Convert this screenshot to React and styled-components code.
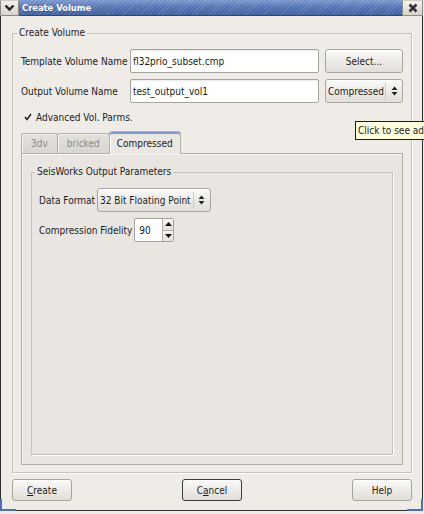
import React from 'react';
import styled, { createGlobalStyle } from 'styled-components';

const FONT = `"DejaVu Sans Condensed", "Liberation Sans", sans-serif`;

const Global = createGlobalStyle`
  *, *::before, *::after { box-sizing: border-box; }
  html, body { margin: 0; padding: 0; background: #efebe7; overflow: hidden; }
  body { width: 424px; height: 514px; font-family: ${FONT}; font-size: 10px; color: #1c1c1c; }
`;

const Stage = styled.div`
  position: relative;
  width: 424px;
  height: 514px;
  overflow: hidden;
  background: #efebe7;
`;

const Window = styled.div`
  width: 423px;
  height: 511px;
  display: flex;
  flex-direction: column;
`;

const TitleBar = styled.div`
  height: 16px;
  display: flex;
  flex: none;
`;

const FrameButton = styled.div`
  width: ${p => p.$w}px;
  height: 16px;
  flex: none;
  display: flex;
  align-items: center;
  justify-content: center;
  background: linear-gradient(#f4f2ef, #d6d2cc);
  border: 1px solid #8c8a86;
  border-top-color: #cfccc7;
`;

const TitleArea = styled.div`
  flex: 1;
  display: flex;
  align-items: center;
  padding-left: 3px;
  color: #fff;
  font-weight: bold;
  font-size: 9.3px;
  background:
    repeating-linear-gradient(135deg, rgba(255,255,255,0.13) 0 1px, transparent 1px 3px),
    linear-gradient(#7c98ce, #5575b4 45%, #3f5f9e);
  border-bottom: 1px solid #2d477c;
  text-shadow: 0 1px 0 rgba(0,0,0,0.25);
`;

const Body = styled.div`
  flex: 1;
  display: flex;
  flex-direction: column;
  padding: 11px 10px 9px 11px;
  border-left: 1px solid #2e2e2e;
  border-right: 1px solid #2e2e2e;
  border-bottom: 1px solid #2e2e2e;
  background: #efebe7;
  position: relative;
`;

const Group = styled.fieldset`
  margin: 0;
  min-width: 0;
  border: 1px solid #c6c2bd;
  box-shadow: 1px 1px 0 #ffffff;
  padding: ${p => p.$pad};
  display: flex;
  flex-direction: column;
  flex: 1;
`;

const Legend = styled.legend`
  padding: 0 2px;
  margin-left: -4px;
  line-height: 12px;
  font-size: 10px;
  color: #1c1c1c;
`;

const FormGrid = styled.div`
  display: grid;
  grid-template-columns: 103px 189px 78px;
  grid-auto-rows: 24px;
  column-gap: 6px;
  row-gap: 6px;
  align-items: center;
`;

const Label = styled.span`
  white-space: nowrap;
`;

const Entry = styled.div`
  height: ${p => p.$h || 24}px;
  background: #fff;
  border: 1px solid #a6a29c;
  border-radius: 2px;
  box-shadow: inset 0 1px 1px rgba(0,0,0,0.08);
  display: flex;
  align-items: center;
  padding-left: 2px;
  white-space: nowrap;
  overflow: hidden;
`;

const PushButton = styled.div`
  height: ${p => p.$h || 24}px;
  width: ${p => (p.$w ? `${p.$w}px` : 'auto')};
  border: 1px solid ${p => (p.$focus ? '#3c3c3c' : '#a8a49e')};
  border-radius: 3px;
  background: linear-gradient(#fbfaf8, #ebe8e4 60%, #e2ded9);
  box-shadow: inset 0 1px 0 #fff;
  display: flex;
  align-items: center;
  justify-content: center;
  white-space: nowrap;
`;

const Combo = styled.div`
  height: 24px;
  width: ${p => p.$w}px;
  border: 1px solid #a8a49e;
  border-radius: 3px;
  background: linear-gradient(#fbfaf8, #ebe8e4 60%, #e2ded9);
  box-shadow: inset 0 1px 0 #fff;
  display: flex;
  align-items: center;
`;

const ComboText = styled.span`
  flex: 1;
  padding-left: 2px;
  white-space: nowrap;
  overflow: hidden;
`;

const ComboArrows = styled.span`
  width: 17px;
  height: 16px;
  flex: none;
  border-left: 1px solid #cdc9c4;
  display: flex;
  align-items: center;
  justify-content: center;
`;

const CheckRow = styled.div`
  display: flex;
  align-items: center;
  gap: 2px;
  height: 16px;
  margin-top: 6px;
`;

const CheckBox = styled.span`
  width: 13px;
  height: 13px;
  display: flex;
  align-items: center;
  justify-content: center;
`;

const TabBar = styled.div`
  display: flex;
  align-items: flex-end;
  height: 22px;
  margin-top: 6px;
  position: relative;
  z-index: 1;
`;

const Tab = styled.div`
  height: ${p => (p.$active ? 23 : 20)}px;
  margin-bottom: ${p => (p.$active ? -1 : 0)}px;
  padding: 0 ${p => p.$px}px;
  display: flex;
  align-items: center;
  border: 1px solid #b3afa9;
  border-bottom: none;
  border-radius: 3px 3px 0 0;
  color: ${p => (p.$active ? '#1c1c1c' : '#8d8b88')};
  background: ${p => (p.$active ? '#ebe7e3' : 'linear-gradient(#e4e0dc, #d9d5d0)')};
  box-shadow: ${p => (p.$active ? 'inset 0 2px 0 #7d9bd0, inset 1px 0 0 #fff' : 'inset 1px 1px 0 rgba(255,255,255,0.6)')};
  white-space: nowrap;
  & + & { margin-left: -1px; }
`;

const Pane = styled.div`
  flex: 1;
  display: flex;
  flex-direction: column;
  border: 1px solid #b3afa9;
  background: #e9e5e1;
  box-shadow: inset 1px 1px 0 #f7f5f3;
  padding: 12px 9px 9px 9px;
`;

const FieldRow = styled.div`
  display: flex;
  align-items: center;
  gap: 2px;
  height: 24px;
  & + & { margin-top: 6px; }
`;

const Spin = styled.div`
  width: 40px;
  height: 24px;
  display: flex;
  border: 1px solid #a6a29c;
  border-radius: 2px;
  background: #fff;
  overflow: hidden;
`;

const SpinText = styled.span`
  flex: 1;
  display: flex;
  align-items: center;
  padding-left: 4px;
`;

const SpinButtons = styled.span`
  width: 11px;
  display: flex;
  flex-direction: column;
  border-left: 1px solid #b3afa9;
`;

const SpinHalf = styled.span`
  flex: 1;
  display: flex;
  align-items: center;
  justify-content: center;
  background: linear-gradient(#f8f6f4, #e4e0db);
  & + & { border-top: 1px solid #b3afa9; }
`;

const ButtonRow = styled.div`
  display: flex;
  justify-content: space-between;
  margin-top: 6px;
`;

const Mn = styled.span`
  text-decoration: underline;
`;

const Tooltip = styled.div`
  position: absolute;
  left: 355px;
  top: 121px;
  height: 19px;
  padding: 0 2px;
  display: flex;
  align-items: center;
  background: #ffffdd;
  border: 1px solid #1a1a1a;
  white-space: nowrap;
  z-index: 5;
`;

const Grip = styled.span`
  position: absolute;
  bottom: -1px;
  ${p => (p.$side === 'left' ? 'left: -1px;' : 'right: -1px;')}
  width: 16px;
  height: 12px;
  border-bottom: 2px solid #4d6fb0;
  ${p => (p.$side === 'left' ? 'border-left: 2px solid #4d6fb0;' : 'border-right: 2px solid #4d6fb0;')}
`;

const UpDown = () => (
  <svg width="7" height="10" viewBox="0 0 7 10">
    <path d="M3.5 0.5 L6.5 4 L0.5 4 Z" fill="#222" />
    <path d="M0.5 6 L6.5 6 L3.5 9.5 Z" fill="#222" />
  </svg>
);

const Tri = ({ down }) => (
  <svg width="7" height="4" viewBox="0 0 7 4">
    {down ? <path d="M0 0 L7 0 L3.5 4 Z" fill="#111" /> : <path d="M3.5 0 L7 4 L0 4 Z" fill="#111" />}
  </svg>
);

export default function App() {
  return (
    <Stage>
      <Global />
      <Window>
        <TitleBar>
          <FrameButton $w={19}>
            <svg width="11" height="8" viewBox="0 0 11 8">
              <path d="M1.5 1.5 L5.5 5.5 L9.5 1.5" fill="none" stroke="#222" strokeWidth="2.4" />
            </svg>
          </FrameButton>
          <TitleArea>Create Volume</TitleArea>
          <FrameButton $w={21}>
            <svg width="10" height="10" viewBox="0 0 10 10">
              <path d="M1.5 1.5 L8.5 8.5 M8.5 1.5 L1.5 8.5" fill="none" stroke="#333" strokeWidth="2.6" />
            </svg>
          </FrameButton>
        </TitleBar>
        <Body>
          <Group $pad="10px 8px 7px 8px">
            <Legend>Create Volume</Legend>
            <FormGrid>
              <Label>Template Volume Name</Label>
              <Entry>fl32prio_subset.cmp</Entry>
              <PushButton>Select...</PushButton>
              <Label>Output Volume Name</Label>
              <Entry>test_output_vol1</Entry>
              <Combo $w={78}>
                <ComboText>Compressed</ComboText>
                <ComboArrows><UpDown /></ComboArrows>
              </Combo>
            </FormGrid>
            <CheckRow>
              <CheckBox>
                <svg width="8" height="8" viewBox="0 0 8 8">
                  <path d="M1 4 L3 6.5 L7 1" fill="none" stroke="#222" strokeWidth="1.5" />
                </svg>
              </CheckBox>
              <Label>Advanced Vol. Parms.</Label>
            </CheckRow>
            <TabBar>
              <Tab $px={9}>3dv</Tab>
              <Tab $px={9}>bricked</Tab>
              <Tab $px={7} $active>Compressed</Tab>
            </TabBar>
            <Pane>
              <Group $pad="10px 7px 7px 7px">
                <Legend>SeisWorks Output Parameters</Legend>
                <FieldRow>
                  <Label>Data Format</Label>
                  <Combo $w={114}>
                    <ComboText>32 Bit Floating Point</ComboText>
                    <ComboArrows><UpDown /></ComboArrows>
                  </Combo>
                </FieldRow>
                <FieldRow>
                  <Label>Compression Fidelity</Label>
                  <Spin>
                    <SpinText>90</SpinText>
                    <SpinButtons>
                      <SpinHalf><Tri /></SpinHalf>
                      <SpinHalf><Tri down /></SpinHalf>
                    </SpinButtons>
                  </Spin>
                </FieldRow>
              </Group>
            </Pane>
          </Group>
          <ButtonRow>
            <PushButton $w={60} $h={22}><span><Mn>C</Mn>reate</span></PushButton>
            <PushButton $w={60} $h={22} $focus><span>C<Mn>a</Mn>ncel</span></PushButton>
            <PushButton $w={60} $h={22}>Help</PushButton>
          </ButtonRow>
          <Grip $side="left" />
          <Grip $side="right" />
        </Body>
      </Window>
      <Tooltip>Click to see advanced volume parameters</Tooltip>
    </Stage>
  );
}
